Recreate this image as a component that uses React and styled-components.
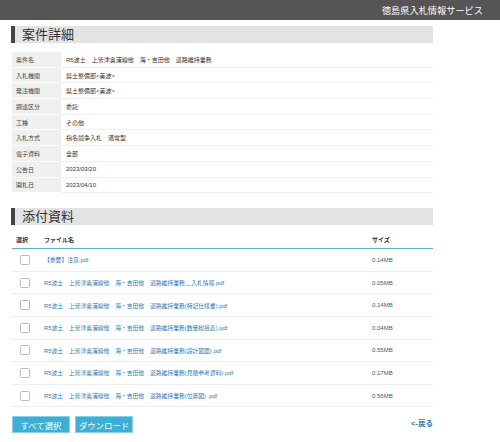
import React from "react";
import styled, { createGlobalStyle } from "styled-components";

const GlobalStyle = createGlobalStyle`
  body {
    margin: 0;
    background: #fff;
    font-family: "Liberation Sans", "Noto Sans CJK JP", sans-serif;
    color: #333;
  }
`;

const details = [
  ["案件名", "R5波土　上皆津奥浦線他　海・吉田他　道路維持業務"],
  ["入札機関", "県土整備部<美波>"],
  ["発注機関", "県土整備部<美波>"],
  ["調達区分", "委託"],
  ["工種", "その他"],
  ["入札方式", "指名競争入札　通常型"],
  ["電子資料", "全部"],
  ["公告日", "2023/03/20"],
  ["開札日", "2023/04/10"],
];

const base = "R5波土　上皆津奥浦線他　海・吉田他　道路維持業務";
const files = [
  ["【重要】注意.pdf", "0.14MB"],
  [base + "__入札情報.pdf", "0.05MB"],
  [base + "(特記仕様書).pdf", "0.14MB"],
  [base + "(数量総括表).pdf", "0.04MB"],
  [base + "(設計図面).pdf", "0.55MB"],
  [base + "(見積参考資料).pdf", "0.17MB"],
  [base + "(位置図) .pdf", "0.56MB"],
];

const TopBar = styled.header`
  height: 20px;
  background: #555;
  display: flex;
  align-items: center;
  justify-content: flex-end;
  padding-right: 17px;
  color: #fff;
  font-size: 9.2px;
`;

const Main = styled.main`
  width: 421px;
  padding-left: 12px;
`;

const SectionTitle = styled.h2`
  margin: ${(p) => p.$top}px 0 0 -1px;
  height: 17px;
  line-height: 17px;
  background: #e3e3e3;
  border-left: 4px solid #444;
  padding-left: 7px;
  font-size: 13px;
  font-weight: normal;
  color: #333;
`;

const DetailList = styled.div`
  margin-top: 9px;
  display: grid;
  grid-template-columns: 49px 1fr;
  font-size: 6px;
`;

const Label = styled.div`
  height: 15.7px;
  display: flex;
  align-items: center;
  padding-left: 4px;
  background: #f0f0f0;
  border-bottom: 1px solid #fff;
  box-sizing: border-box;
  color: #444;
`;

const Value = styled.div`
  height: 15.7px;
  display: flex;
  align-items: center;
  padding-left: 5px;
  border-bottom: 1px solid #f0f0f0;
  box-sizing: border-box;
  color: #333;
`;

const FileGrid = styled.div`
  display: grid;
  grid-template-columns: 32px 328px 1fr;
  font-size: 6px;
`;

const HeadCell = styled.div`
  height: 24px;
  box-sizing: border-box;
  padding: 10px 0 0 ${(p) => p.$pad || 0}px;
  font-weight: bold;
  color: #333;
  border-bottom: 1.5px solid #5ab8bc;
`;

const Cell = styled.div`
  height: 22.6px;
  box-sizing: border-box;
  display: flex;
  align-items: center;
  padding-left: ${(p) => p.$pad || 0}px;
  border-bottom: 1px solid #eeeeee;
  font-size: ${(p) => (p.$link ? "5.8px" : "6px")};
  color: ${(p) => (p.$link ? "#2f7bb5" : "#555")};
`;

const Check = styled.span`
  width: 8px;
  height: 8px;
  border: 1px solid #bbb;
  border-radius: 1.5px;
  background: #fff;
`;

const Footer = styled.div`
  margin-top: 9px;
  display: flex;
  align-items: flex-start;
  gap: 5px;
`;

const Button = styled.button`
  width: 58px;
  height: 17px;
  padding: 0;
  background: #3dafd4;
  border: 1px solid #8ad0e6;
  color: #fff;
  font-family: "Noto Sans CJK JP", sans-serif;
  font-size: 8.4px;
`;

const Back = styled.a`
  margin-left: auto;
  margin-top: 1px;
  color: #2f7bb5;
  font-weight: bold;
  font-size: 7.5px;
  text-decoration: none;
`;

export default function App() {
  return (
    <>
      <GlobalStyle />
      <TopBar>徳島県入札情報サービス</TopBar>
      <Main>
        <SectionTitle $top={6}>案件詳細</SectionTitle>
        <DetailList>
          {details.map(([k, v]) => (
            <React.Fragment key={k}>
              <Label>{k}</Label>
              <Value>{v}</Value>
            </React.Fragment>
          ))}
        </DetailList>
        <SectionTitle $top={15}>添付資料</SectionTitle>
        <FileGrid>
          <HeadCell $pad={4}>選択</HeadCell>
          <HeadCell>ファイル名</HeadCell>
          <HeadCell>サイズ</HeadCell>
          {files.map(([name, size]) => (
            <React.Fragment key={name}>
              <Cell $pad={8}>
                <Check />
              </Cell>
              <Cell $link>{name}</Cell>
              <Cell>{size}</Cell>
            </React.Fragment>
          ))}
        </FileGrid>
        <Footer>
          <Button>すべて選択</Button>
          <Button>ダウンロード</Button>
          <Back href="#">&lt;-戻る</Back>
        </Footer>
      </Main>
    </>
  );
}
